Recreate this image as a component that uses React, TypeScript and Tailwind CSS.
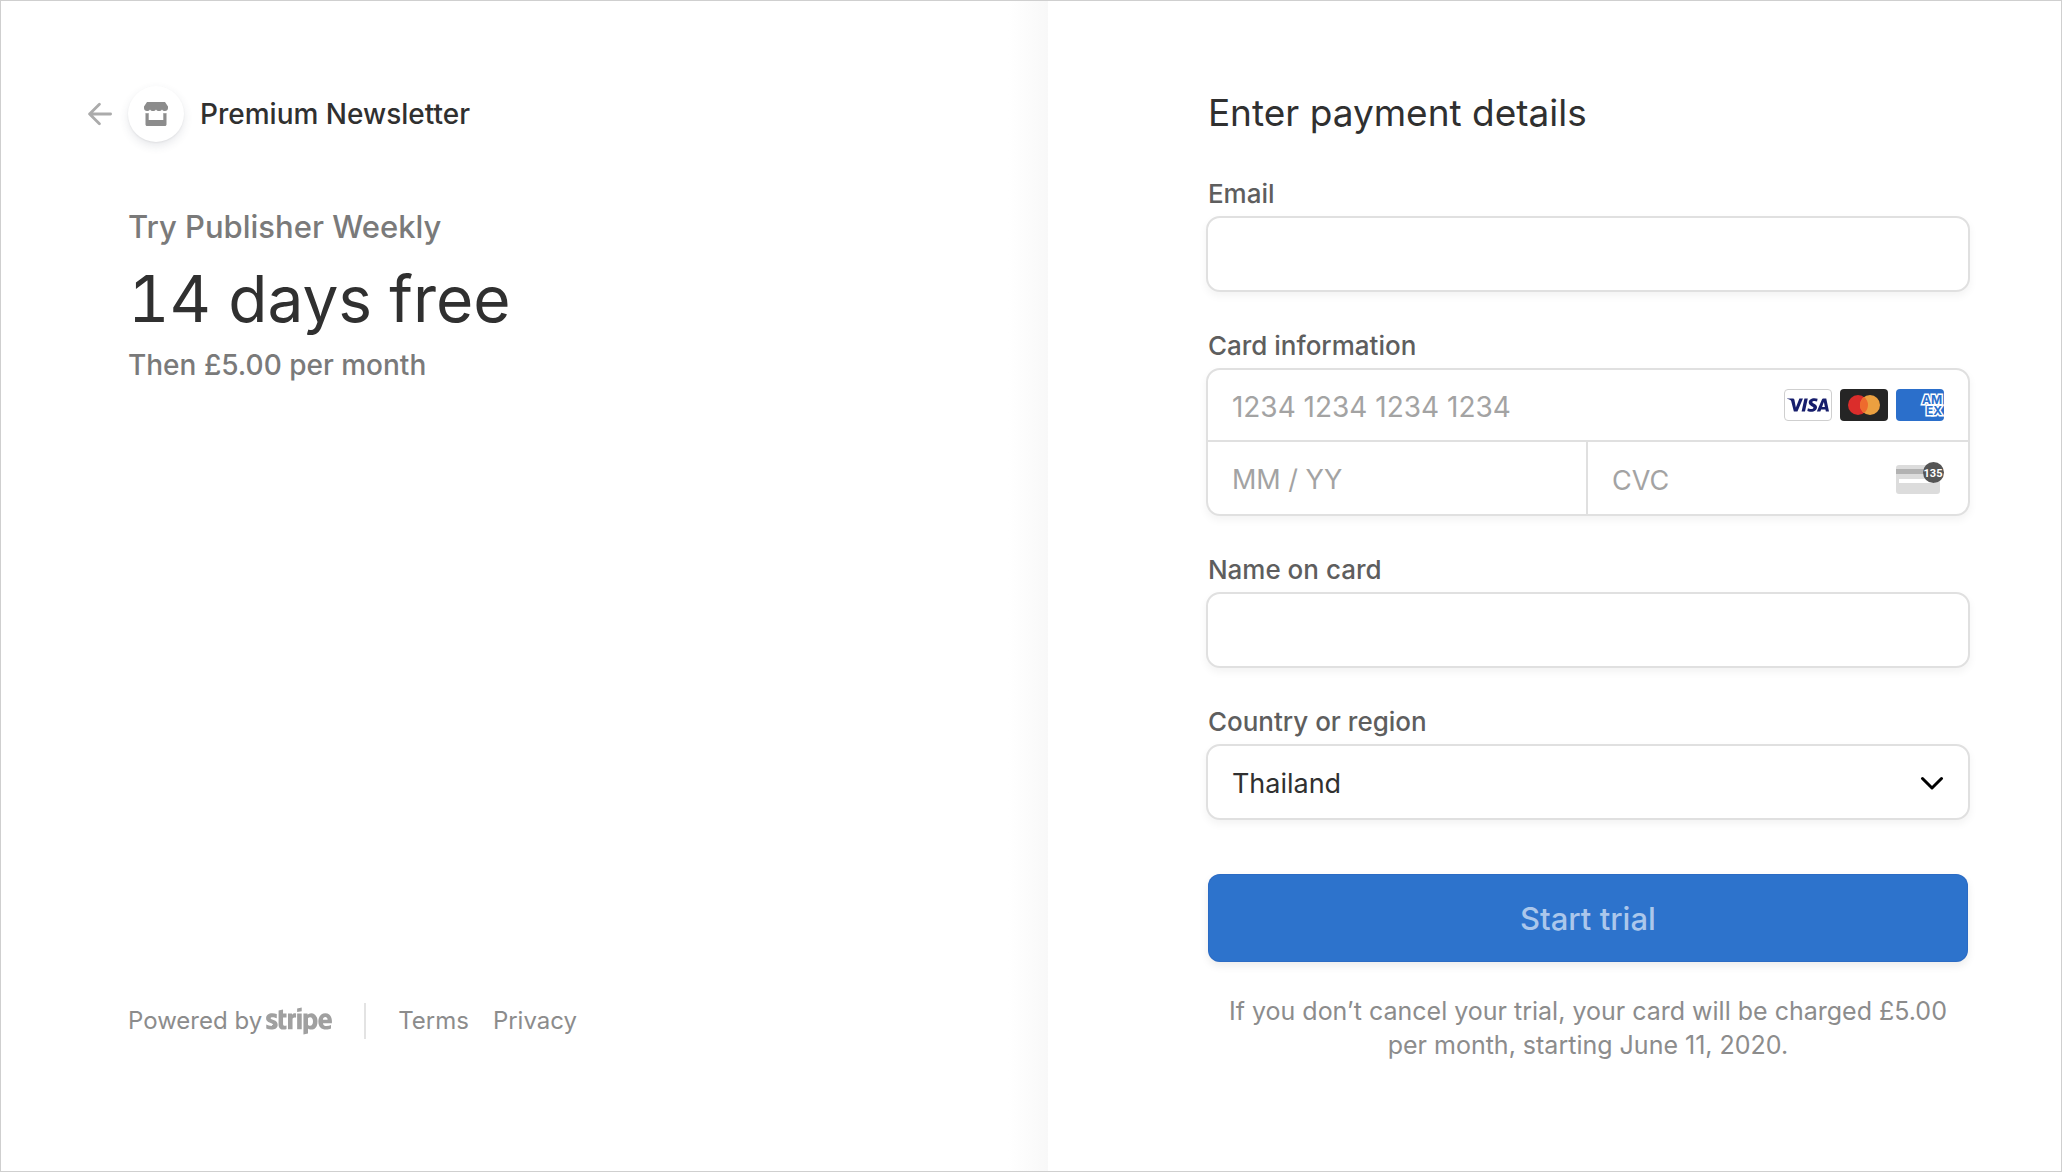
import { FaStripe } from "react-icons/fa";
import { SiVisa } from "react-icons/si";

const fieldBox =
  "rounded-[14px] border-2 border-[#e0e0e0] bg-white shadow-[0_4px_8px_rgba(0,0,0,0.05)]";
const inputBase =
  "min-w-0 flex-1 bg-transparent px-6 pt-1 text-[#303030] outline-none placeholder:text-[#a3a3a3]";
const labelBase = "mb-1.5 px-0.5 text-[26px] leading-8 font-medium text-[#5e5e5e]";

function BackArrow() {
  return (
    <svg viewBox="0 0 24 24" className="size-6" fill="none" stroke="#ababab" strokeWidth="2.8" strokeLinecap="round" strokeLinejoin="round" aria-hidden="true">
      <path d="M22.600 12H1.600M11.400 2.200L1.600 12l9.800 9.800" />
    </svg>
  );
}

function StoreIcon() {
  return (
    <svg viewBox="0 0 24 24" className="size-6" fill="#8c8c8c" aria-hidden="true">
      <path d="M3 0h18l3 4.500V6c0 1.800-1.300 3-3 3-1.300 0-2.300-.6-3-1.600C17.300 8.400 16.300 9 15 9s-2.300-.6-3-1.600C11.300 8.400 10.300 9 9 9s-2.300-.6-3-1.600C5.300 8.400 4.300 9 3 9 1.300 9 0 7.800 0 6V4.500z" />
      <path d="M1.500 11c.5.200 1 .200 1.500.200.600 0 1.200-.100 1.700-.300V18h14.600v-7.100c.500.200 1.100.300 1.700.300.500 0 1 0 1.500-.200V22.500c0 .8-.7 1.500-1.500 1.500H3c-.8 0-1.500-.7-1.500-1.500z" />
    </svg>
  );
}

function VisaCard() {
  return (
    <span className="flex h-8 w-12 items-center justify-center overflow-hidden rounded-[4px] border border-[#cfcfcf] bg-white">
      <SiVisa viewBox="0 8 24 8" className="h-[14px] w-[42px] text-[#171e6c]" aria-label="Visa" />
    </span>
  );
}

function MastercardCard() {
  return (
    <svg viewBox="0 0 48 32" className="h-8 w-12" role="img" aria-label="Mastercard">
      <rect width="48" height="32" rx="4" fill="#252525" />
      <circle cx="18" cy="16" r="10" fill="#db2d2b" />
      <circle cx="30" cy="16" r="10" fill="#eba040" />
      <path d="M24 8a10 10 0 0 1 0 16 10 10 0 0 1 0-16z" fill="#ee6b2d" />
    </svg>
  );
}

function AmexCard() {
  return (
    <svg viewBox="0 0 48 32" className="h-8 w-12 overflow-hidden rounded-[4px] bg-[#2b6fcb] font-['Inter',sans-serif] text-[12px] font-bold" role="img" aria-label="American Express">
      <text fill="#2b6fcb" stroke="#fff" strokeWidth="3" paintOrder="stroke" strokeLinejoin="miter">
        <tspan x="26" y="15">AM</tspan>
        <tspan x="30" y="26">EX</tspan>
      </text>
    </svg>
  );
}

function CvcIcon() {
  return (
    <svg viewBox="0 0 48 32" className="h-8 w-12 font-['Roboto',sans-serif] text-[11px] font-bold" aria-hidden="true">
      <rect y="3" width="44" height="29" rx="3" fill="#dcdcdc" />
      <path d="M0 7h44v5H0z" fill="#b2b2b2" />
      <path d="M3 17h36v4H3z" fill="#fff" />
      <circle cx="37.500" cy="10.500" r="10.500" fill="#555" />
      <text x="37" y="14.500" textAnchor="middle" fill="#fff">135</text>
    </svg>
  );
}

export default function App() {
  return (
    <div className="grid min-h-screen grid-cols-[31fr_30fr] border border-[#cfcfcf] bg-white font-['Inter','Liberation_Sans',sans-serif] text-[#303030]">
      <section className="flex flex-col bg-linear-to-l from-[#f8f8f8] to-white to-[40px] pt-[85px] pb-[132px] pl-[87px]">
        <header className="flex items-center">
          <a href="#back" aria-label="Back" className="mr-4">
            <BackArrow />
          </a>
          <span className="mr-4 flex size-14 items-center justify-center rounded-full bg-white shadow-[0_4px_10px_rgba(60,66,87,0.12),0_1px_2px_rgba(0,0,0,0.06)]">
            <StoreIcon />
          </span>
          <h1 className="text-[28px] font-medium">Premium Newsletter</h1>
        </header>

        <div className="mt-[65px] pl-10">
          <p className="text-[31px] leading-10 font-medium text-[#7a7a7a]">Try Publisher Weekly</p>
          <p className="mt-3 text-[64px] leading-[80px] tabular-nums">14 days free</p>
          <p className="mt-2 text-[28px] leading-9 font-medium text-[#7a7a7a]">Then £5.00 per month</p>
        </div>

        <footer className="mt-auto flex h-9 items-center pl-10 text-[24px] text-[#8c8c8c]">
          <a href="#stripe" className="flex items-center gap-1">
            Powered by
            <FaStripe viewBox="0 120 640 272" className="h-7 w-[66px] text-[#a0a0a0]" aria-label="Stripe" />
          </a>
          <span className="mx-8 h-9 w-0.5 bg-[#e3e3e3]" />
          <nav className="flex gap-6">
            <a href="#terms">Terms</a>
            <a href="#privacy">Privacy</a>
          </nav>
        </footer>
      </section>

      <form className="flex flex-col pt-[87px] pr-[91px] pl-[158px]">
        <h2 className="mb-10 px-0.5 text-[37px] leading-[50px]">Enter payment details</h2>

        <label htmlFor="email" className={labelBase}>Email</label>
        <div className={`mb-[38px] flex h-[76px] ${fieldBox}`}>
          <input id="email" type="email" className={`text-[27px] ${inputBase}`} />
        </div>

        <label htmlFor="card" className={labelBase}>Card information</label>
        <div className={`mb-[38px] ${fieldBox}`}>
          <div className="flex h-[72px] items-center border-b-2 border-[#e0e0e0] pr-6">
            <input id="card" inputMode="numeric" placeholder="1234 1234 1234 1234" className={`h-full text-[28px] ${inputBase}`} />
            <div className="flex gap-2">
              <VisaCard />
              <MastercardCard />
              <AmexCard />
            </div>
          </div>
          <div className="grid h-[72px] grid-cols-2">
            <div className="flex border-r-2 border-[#e0e0e0]">
              <input aria-label="Expiry date" placeholder="MM / YY" className={`text-[27px] ${inputBase}`} />
            </div>
            <div className="flex items-center pr-6">
              <input aria-label="CVC" placeholder="CVC" className={`h-full text-[27px] ${inputBase}`} />
              <CvcIcon />
            </div>
          </div>
        </div>

        <label htmlFor="name" className={labelBase}>Name on card</label>
        <div className={`mb-[38px] flex h-[76px] ${fieldBox}`}>
          <input id="name" type="text" className={`text-[27px] ${inputBase}`} />
        </div>

        <label htmlFor="country" className={labelBase}>Country or region</label>
        <div className={`relative flex h-[76px] ${fieldBox}`}>
          <select id="country" defaultValue="Thailand" className={`appearance-none text-[27px] ${inputBase}`}>
            <option>Thailand</option>
          </select>
          <svg viewBox="0 0 24 16" className="pointer-events-none absolute top-1/2 right-6 h-4 w-6 -translate-y-1/2" fill="none" stroke="#000" strokeWidth="3" strokeLinecap="round" strokeLinejoin="round" aria-hidden="true">
            <path d="M2.500 4.500L12 14l9.500-9.500" />
          </svg>
        </div>

        <button type="button" className="mx-0.5 mt-[54px] h-[88px] rounded-xl bg-[#2d73cc] pt-0.5 text-[31px] font-medium text-[#abc7eb] shadow-[0_4px_8px_rgba(0,0,0,0.08),inset_0_0_0_1px_rgba(40,90,180,0.3)]">
          Start trial
        </button>

        <p className="mt-8 px-2 text-center text-[25px] leading-[34px] text-[#8c8c8c]">
          If you don’t cancel your trial, your card will be charged £5.00 per month, starting June 11, 2020.
        </p>
      </form>
    </div>
  );
}
